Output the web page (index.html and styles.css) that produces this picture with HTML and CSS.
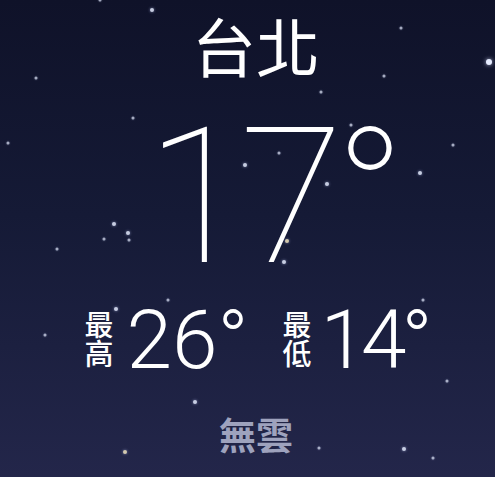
FILE: index.html
```html
<!DOCTYPE html>
<html lang="zh-Hant">
<head>
<meta charset="utf-8">
<link rel="stylesheet" href="styles.css">
</head>
<body>
<div class="sky">
  <div class="stars">
    <span class="star s2" style="left:152px;top:10px"></span>
    <span class="star s1" style="left:100px;top:0px"></span>
    <span class="star s1" style="left:36px;top:78px"></span>
    <span class="star s1" style="left:401px;top:28px"></span>
    <span class="star s3" style="left:489px;top:62px"></span>
    <span class="star s1" style="left:384px;top:76px"></span>
    <span class="star s1" style="left:321px;top:92px"></span>
    <span class="star s1" style="left:133px;top:118px"></span>
    <span class="star s1" style="left:8px;top:143px"></span>
    <span class="star s1" style="left:351px;top:125px"></span>
    <span class="star s1" style="left:279px;top:153px"></span>
    <span class="star s1" style="left:453px;top:145px"></span>
    <span class="star s2" style="left:245px;top:165px"></span>
    <span class="star s2" style="left:420px;top:173px"></span>
    <span class="star s2" style="left:327px;top:184px"></span>
    <span class="star s2" style="left:114px;top:224px"></span>
    <span class="star s2" style="left:128px;top:233px"></span>
    <span class="star s1" style="left:104px;top:239px"></span>
    <span class="star s1" style="left:129px;top:240px"></span>
    <span class="star s1" style="left:57px;top:249px"></span>
    <span class="star s2 warm" style="left:287px;top:241px"></span>
    <span class="star s2" style="left:284px;top:262px"></span>
    <span class="star s1" style="left:168px;top:300px"></span>
    <span class="star s2" style="left:116px;top:309px"></span>
    <span class="star s1" style="left:423px;top:300px"></span>
    <span class="star s1" style="left:45px;top:335px"></span>
    <span class="star s1" style="left:447px;top:381px"></span>
    <span class="star s2" style="left:195px;top:402px"></span>
    <span class="star s2 warm" style="left:125px;top:452px"></span>
    <span class="star s1" style="left:319px;top:448px"></span>
    <span class="star s2" style="left:404px;top:449px"></span>
    <span class="star s1" style="left:433px;top:458px"></span>
  </div>
  <main class="weather">
    <h1 class="city">台北</h1>
    <div class="temp">17°</div>
    <div class="range">
      <div class="item">
        <span class="label">最<br>高</span>
        <span class="value">26°</span>
      </div>
      <div class="item">
        <span class="label">最<br>低</span>
        <span class="value tight">14°</span>
      </div>
    </div>
    <div class="cond">無雲</div>
  </main>
</div>
</body>
</html>
```
FILE: styles.css
```css
* { box-sizing: border-box; }
html, body { margin: 0; padding: 0; }
body {
  width: 495px;
  height: 477px;
  overflow: hidden;
  font-family: "Noto Sans CJK TC", "Noto Sans", sans-serif;
}
.sky {
  position: relative;
  width: 495px;
  height: 477px;
  background: linear-gradient(180deg, #0f1229 0%, #151a36 45%, #23264a 100%);
  overflow: hidden;
}
.stars { position: absolute; inset: 0; }
.star {
  position: absolute;
  border-radius: 50%;
  background: #e6ecff;
  transform: translate(-50%, -50%);
}
.s1 { width: 3px; height: 3px; opacity: 0.7; box-shadow: 0 0 2px rgba(200,210,255,0.6); }
.s2 { width: 4px; height: 4px; opacity: 0.85; box-shadow: 0 0 3px rgba(200,210,255,0.7); }
.s3 { width: 6px; height: 6px; box-shadow: 0 0 4px rgba(220,225,255,0.8); }
.warm { background: #f3e6c0; }

.weather {
  position: relative;
  display: flex;
  flex-direction: column;
  align-items: center;
  padding-left: 17px;
  color: #fff;
}
.city {
  margin: 9px 0 0;
  font-size: 64px;
  font-weight: 400;
  line-height: 70px;
}
.temp {
  margin-top: 23px;
  font-family: "Roboto", "Inter", sans-serif;
  font-weight: 100;
  font-size: 190px;
  line-height: 1;
  letter-spacing: -10px;
  padding-left: 30px;
}
.range {
  display: flex;
  gap: 34px;
  margin-top: 7px;
}
.item {
  display: flex;
  align-items: center;
  gap: 13px;
}
.label {
  font-size: 29px;
  font-weight: 500;
  line-height: 29px;
  margin-bottom: 4px;
}
.value {
  font-family: "Roboto", "Inter", sans-serif;
  font-weight: 300;
  font-size: 82px;
  line-height: 1;
}
.value.tight {
  letter-spacing: -5px;
  margin-left: -4px;
}
.cond {
  margin-top: 35px;
  font-size: 37px;
  font-weight: 700;
  line-height: 1;
  color: #9ea2bd;
}
```
